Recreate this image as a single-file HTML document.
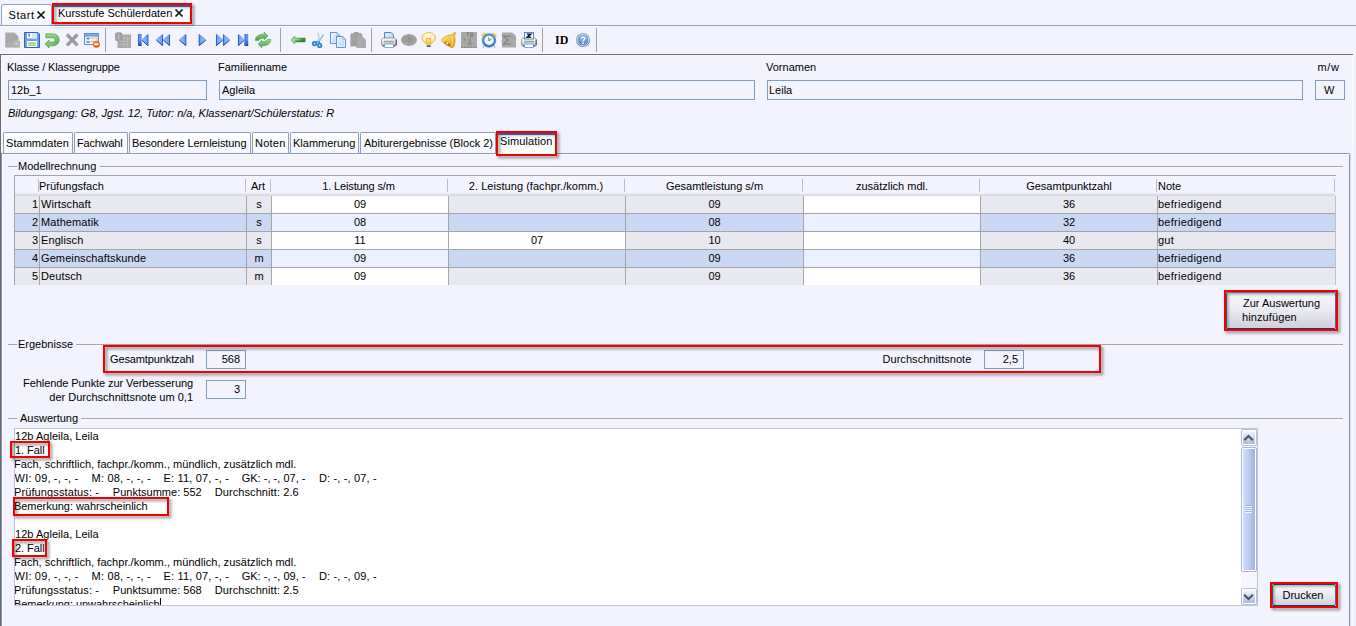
<!DOCTYPE html>
<html lang="de">
<head>
<meta charset="utf-8">
<title>Kursstufe Schülerdaten</title>
<style>
html,body{margin:0;padding:0;}
body{width:1356px;height:626px;overflow:hidden;background:#f2f3fd;position:relative;
 font-family:"Liberation Sans",sans-serif;font-size:11px;color:#000;line-height:13px;letter-spacing:0;}
.a{position:absolute;white-space:pre;}
.t{position:absolute;white-space:pre;height:13px;line-height:13px;}
.inp{position:absolute;box-sizing:border-box;border:1px solid #7f9db9;background:#f2f3fd;height:20px;}
.red{position:absolute;box-sizing:border-box;border:2px solid #f00000;filter:drop-shadow(2px 2px 1.5px rgba(0,0,0,.5));}
.tab{position:absolute;box-sizing:border-box;top:132px;height:21px;border:1px solid #8e9fbc;border-bottom:none;border-radius:2px 2px 0 0;background:linear-gradient(#fefeff,#f8f8ff);}
.hl{position:absolute;height:1px;background:#a4a4a4;}
.vl{position:absolute;width:1px;background:#a6a6a6;}
.ic{position:absolute;top:32px;width:16px;height:16px;}
.sep{position:absolute;top:28px;width:1px;height:24px;background:#a2a2a2;}
.row{position:absolute;left:15px;width:1320px;height:18px;}
.g{background:#e8e8f0;}
.b{background:#cbd8f5;}
.cell{position:absolute;top:0;height:18px;}
.c{position:absolute;white-space:pre;height:13px;line-height:13px;top:3px;}
.ln{position:absolute;left:16px;height:14px;line-height:14px;white-space:pre;overflow:hidden;}
.btn{box-sizing:border-box;border:1px solid #5a6a8a;border-top-color:#8a94ad;border-bottom-color:#1e3e70;border-radius:2px;background:linear-gradient(#f7f7fc 0%,#ececf4 45%,#cfd0dc 100%);}
.sbtn{box-sizing:border-box;border:1px solid #b6c0da;border-radius:2px;background:linear-gradient(#fcfcff,#a8b6da);box-shadow:inset 0 0 0 1px #fff;}
.sthumb{box-sizing:border-box;border:1px solid #a9b7da;border-radius:2px;background:linear-gradient(90deg,#d6e1fc,#c3d2f8 35%,#9eadd3);box-shadow:inset 0 0 0 1px #fff;}
</style>
</head>
<body>
<!-- top tab strip -->
<div class="a" style="left:0;top:25px;width:1356px;height:1px;background:#8fa3c2"></div>
<div class="a" style="left:1px;top:4px;width:51px;height:21px;box-sizing:border-box;border:1px solid #8fa3c2;border-bottom:none;border-radius:3px 3px 0 0;background:linear-gradient(#ffffff,#f6f7fe)"></div>
<div class="t" style="left:8.5px;top:9px;letter-spacing:0.6px">Start</div>
<svg class="a" style="left:36px;top:10px" width="10" height="10" viewBox="0 0 10 10"><path d="M1.5 1.5L8.5 8.5M8.5 1.5L1.5 8.5" stroke="#111" stroke-width="1.7" fill="none"/></svg>
<div class="a" style="left:54px;top:5px;width:136px;height:19px;background:#fff"></div>
<div class="a" style="left:54px;top:5px;width:136px;height:2px;background:#4f74cc"></div>
<div class="t" style="left:58px;top:7px;">Kursstufe Schülerdaten</div>
<svg class="a" style="left:174px;top:8px" width="10" height="10" viewBox="0 0 10 10"><path d="M1.5 1.5L8.5 8.5M8.5 1.5L1.5 8.5" stroke="#111" stroke-width="1.7" fill="none"/></svg>
<div class="red" style="left:52px;top:3px;width:140px;height:21px"></div>

<!-- toolbar -->
<div class="a" style="left:0;top:26px;width:602px;height:1px;background:#fafaff"></div><div class="a" style="left:0;top:53px;width:602px;height:1px;background:#fafaff"></div>
<div class="a" style="left:0;top:54px;width:1353px;height:1px;background:#6b6b6b"></div>
<div class="a" style="left:0;top:54px;width:1px;height:572px;background:#6b6b6b"></div>
<div class="a" style="left:1px;top:55px;width:1px;height:571px;background:#f9f9ff"></div><div class="a" style="left:1px;top:55px;width:1352px;height:1px;background:#f9f9ff"></div>
<!--ICONS-->
<svg width="0" height="0" style="position:absolute"><defs>
<linearGradient id="gb" x1="0" y1="0" x2="0" y2="1"><stop offset="0" stop-color="#7fb0ee"/><stop offset="1" stop-color="#1246c4"/></linearGradient>
<linearGradient id="gbl" x1="0" y1="0" x2="1" y2="0"><stop offset="0" stop-color="#b0d0f8"/><stop offset="1" stop-color="#5f94ea"/></linearGradient>
<linearGradient id="gbr" x1="1" y1="0" x2="0" y2="0"><stop offset="0" stop-color="#b0d0f8"/><stop offset="1" stop-color="#5f94ea"/></linearGradient>
<linearGradient id="gg" x1="0" y1="0" x2="0" y2="1"><stop offset="0" stop-color="#8fd07e"/><stop offset="1" stop-color="#2f8a2c"/></linearGradient>
<linearGradient id="gg2" x1="0" y1="0" x2="0" y2="1"><stop offset="0" stop-color="#96d68a"/><stop offset="1" stop-color="#4aa446"/></linearGradient>
<linearGradient id="ggd" x1="0" y1="0" x2="1" y2="1"><stop offset="0" stop-color="#8ed282"/><stop offset="0.6" stop-color="#76c46c"/><stop offset="1" stop-color="#3e9c3a"/></linearGradient>
<linearGradient id="gga" x1="0" y1="0" x2="1" y2="0"><stop offset="0" stop-color="#96d88c"/><stop offset="0.35" stop-color="#9cdc94"/><stop offset="1" stop-color="#1e7c28"/></linearGradient>
<linearGradient id="gpr" x1="0" y1="0" x2="0" y2="1"><stop offset="0" stop-color="#ffffff"/><stop offset="0.55" stop-color="#e2e2e2"/><stop offset="1" stop-color="#b0b0b0"/></linearGradient>
<linearGradient id="gpg" x1="0" y1="0" x2="1" y2="1"><stop offset="0" stop-color="#e6f0fc"/><stop offset="1" stop-color="#b9d6f8"/></linearGradient>
<linearGradient id="gdk" x1="0" y1="0" x2="0" y2="1"><stop offset="0.45" stop-color="#1030b0" stop-opacity="0"/><stop offset="1" stop-color="#0a2ab0" stop-opacity="0.75"/></linearGradient>
<radialGradient id="gbulb" cx="0.5" cy="0.4" r="0.6"><stop offset="0" stop-color="#fffff4"/><stop offset="0.6" stop-color="#fdf3ba"/><stop offset="1" stop-color="#f8c878"/></radialGradient>
<linearGradient id="gbell" x1="0" y1="0" x2="1" y2="1"><stop offset="0" stop-color="#ffec90"/><stop offset="0.5" stop-color="#f2c23c"/><stop offset="1" stop-color="#d89a1c"/></linearGradient>
<radialGradient id="ghelp" cx="0.5" cy="0.3" r="0.8"><stop offset="0" stop-color="#90b6e6"/><stop offset="1" stop-color="#4678bc"/></radialGradient>
<radialGradient id="gor" cx="0.4" cy="0.35" r="0.7"><stop offset="0" stop-color="#ff9a3a"/><stop offset="1" stop-color="#d4560a"/></radialGradient>
</defs></svg>
<svg class="a" style="left:5px;top:32px" width="16" height="16" viewBox="0 0 16 16"><path d="M1.2 0.5H9.5L13.5 4.5V9H15V15.5H1.2C0.6 15.5 0.2 15.1 0.2 14.5V1.5C0.2 0.9 0.6 0.5 1.2 0.5Z" fill="#a9a9a9"/><circle cx="11.3" cy="11.8" r="3.7" fill="#b3b3b3"/><path d="M9.3 11.8h4M11.3 9.8v4" stroke="#c6c6c6" stroke-width="1.2"/><path d="M1.5 11.5h6M1.5 13.5h6.5" stroke="#b4b4b4" stroke-width="1"/></svg>
<svg class="a" style="left:24px;top:32px" width="16" height="16" viewBox="0 0 16 16"><path d="M0.5 0.5H14L15.5 2V15.5H0.5Z" fill="#6f9fe2" stroke="#2f64bc"/><rect x="3" y="1" width="10" height="5.5" fill="#f4f9ff"/><rect x="8" y="1" width="5" height="5.5" fill="#d4e6fa"/><rect x="4.6" y="1.6" width="1.2" height="3" fill="#2f64bc"/><rect x="3" y="9" width="10" height="6" fill="#ffffff"/><path d="M4 11.2h8M4 13.2h8" stroke="#8cc152" stroke-width="1.3"/></svg>
<svg class="a" style="left:44px;top:32px" width="16" height="16" viewBox="0 0 16 16"><path d="M1.9 1.9H9.3A5.95 5.95 0 0 1 9.3 13.8H5V15.9L1 11.9L5 8.1V10.2H9A2.2 2.2 0 0 0 9 5.8H1.9Z" fill="url(#ggd)" stroke="#3f9e3c" stroke-width="0.7"/><path d="M2.6 3.2H9.3A4.6 4.6 0 0 1 12 4.2" stroke="#a6dc9a" stroke-width="0.9" fill="none"/></svg>
<svg class="a" style="left:65px;top:32px" width="15" height="16" viewBox="0 0 15 16"><path d="M2 2.5L12.4 13.3M12.4 2.5L2 13.3" stroke="#9b9b9b" stroke-width="3.3" fill="none"/></svg>
<svg class="a" style="left:84px;top:32px" width="17" height="16" viewBox="0 0 17 16"><rect x="0.5" y="1.5" width="14" height="11" fill="#f4f3ee" stroke="#5b8fd6"/><rect x="0.5" y="1.5" width="14" height="2.5" fill="#7fb0ea" stroke="#5b8fd6"/><path d="M2.5 6.5h3M2.5 10h3" stroke="#3f78d0" stroke-width="1.4"/><path d="M6.5 6h6.5v2.5M6.5 9.5h4" stroke="#bdbdb6" stroke-width="1" fill="none"/><circle cx="12.3" cy="12.2" r="3.5" fill="url(#gor)"/><rect x="10.2" y="11.6" width="4.2" height="1.4" fill="#fff"/></svg>
<svg class="a" style="left:115px;top:32px" width="17" height="16" viewBox="0 0 17 16"><rect x="2.5" y="2.5" width="13.5" height="13.5" fill="#a9a9a9"/><path d="M4 6.5h11M4 9.5h11M4 12.5h11M9 4v11M12.5 4v11" stroke="#bdbdbd" stroke-width="0.8"/><rect x="0" y="0.3" width="7.5" height="9" rx="2.5" fill="#a2a2a2"/><rect x="3" y="2.5" width="1.5" height="4.5" fill="#b9b9b9"/></svg>
<svg class="a" style="left:137px;top:32px" width="13" height="16" viewBox="0 0 13 16"><rect x="1" y="2" width="3.6" height="12" fill="#5f92e6"/><rect x="1" y="2" width="3.6" height="12" fill="url(#gdk)"/><path d="M1.4 2V14" stroke="#3a6cd8" stroke-width="0.8"/><path d="M11.3 2V14L4.6 8Z" fill="url(#gbl)"/><path d="M5.0 8.2L10.9 13.6" stroke="#1436b8" stroke-width="1" fill="none"/><path d="M10.850000000000001 2.6V13.8" stroke="#2a5cd0" stroke-width="0.9" fill="none"/><path d="M5.0 7.8L10.9 2.4" stroke="#5a8ee4" stroke-width="0.8" fill="none"/></svg>
<svg class="a" style="left:155px;top:32px" width="16" height="16" viewBox="0 0 16 16"><path d="M8 2V14L1 8Z" fill="url(#gbl)"/><path d="M1.4 8.2L7.6 13.6" stroke="#1436b8" stroke-width="1" fill="none"/><path d="M7.55 2.6V13.8" stroke="#2a5cd0" stroke-width="0.9" fill="none"/><path d="M1.4 7.8L7.6 2.4" stroke="#5a8ee4" stroke-width="0.8" fill="none"/><path d="M15 2V14L8 8Z" fill="url(#gbl)"/><path d="M8.4 8.2L14.6 13.6" stroke="#1436b8" stroke-width="1" fill="none"/><path d="M14.55 2.6V13.8" stroke="#2a5cd0" stroke-width="0.9" fill="none"/><path d="M8.4 7.8L14.6 2.4" stroke="#5a8ee4" stroke-width="0.8" fill="none"/></svg>
<svg class="a" style="left:178px;top:32px" width="10" height="16" viewBox="0 0 10 16"><path d="M8.2 2V14L1 8Z" fill="url(#gbl)"/><path d="M1.4 8.2L7.799999999999999 13.6" stroke="#1436b8" stroke-width="1" fill="none"/><path d="M7.749999999999999 2.6V13.8" stroke="#2a5cd0" stroke-width="0.9" fill="none"/><path d="M1.4 7.8L7.799999999999999 2.4" stroke="#5a8ee4" stroke-width="0.8" fill="none"/></svg>
<svg class="a" style="left:198px;top:32px" width="10" height="16" viewBox="0 0 10 16"><path d="M0.8 2V14L8.2 8Z" fill="url(#gbr)"/><path d="M7.799999999999999 8.2L1.2000000000000002 13.6" stroke="#1436b8" stroke-width="1" fill="none"/><path d="M1.25 2.6V13.8" stroke="#2a5cd0" stroke-width="0.9" fill="none"/><path d="M7.799999999999999 7.8L1.2000000000000002 2.4" stroke="#5a8ee4" stroke-width="0.8" fill="none"/></svg>
<svg class="a" style="left:215px;top:32px" width="16" height="16" viewBox="0 0 16 16"><path d="M1 2V14L8 8Z" fill="url(#gbr)"/><path d="M7.6 8.2L1.4 13.6" stroke="#1436b8" stroke-width="1" fill="none"/><path d="M1.45 2.6V13.8" stroke="#2a5cd0" stroke-width="0.9" fill="none"/><path d="M7.6 7.8L1.4 2.4" stroke="#5a8ee4" stroke-width="0.8" fill="none"/><path d="M8 2V14L15 8Z" fill="url(#gbr)"/><path d="M14.6 8.2L8.4 13.6" stroke="#1436b8" stroke-width="1" fill="none"/><path d="M8.45 2.6V13.8" stroke="#2a5cd0" stroke-width="0.9" fill="none"/><path d="M14.6 7.8L8.4 2.4" stroke="#5a8ee4" stroke-width="0.8" fill="none"/></svg>
<svg class="a" style="left:237px;top:32px" width="13" height="16" viewBox="0 0 13 16"><path d="M1 2V14L7.6 8Z" fill="url(#gbr)"/><path d="M7.199999999999999 8.2L1.4 13.6" stroke="#1436b8" stroke-width="1" fill="none"/><path d="M1.45 2.6V13.8" stroke="#2a5cd0" stroke-width="0.9" fill="none"/><path d="M7.199999999999999 7.8L1.4 2.4" stroke="#5a8ee4" stroke-width="0.8" fill="none"/><rect x="7.6" y="2" width="3.6" height="12" fill="#5f92e6"/><rect x="7.6" y="2" width="3.6" height="12" fill="url(#gdk)"/><path d="M8.0 2V14" stroke="#3a6cd8" stroke-width="0.8"/></svg>
<svg class="a" style="left:255px;top:32px" width="17" height="16" viewBox="0 0 17 16"><path d="M0.2 8.4C0.2 4.5 3.5 2.2 9.2 2.2V0L12.9 4L9.2 7.7V6.2C6 6.2 4.2 6.8 3.6 8.4Z" fill="url(#gg2)" stroke="#46a044" stroke-width="0.6"/><path d="M15.8 7.5C15.8 11.5 12.5 13.9 6.7 13.9V15.7L3.2 11.9L6.7 8.2V9.7C10 9.7 11.8 9.1 12.4 7.5Z" fill="url(#gg2)" stroke="#46a044" stroke-width="0.6"/></svg>
<svg class="a" style="left:290px;top:32px" width="16" height="16" viewBox="0 0 16 16"><path d="M0.9 8L4.7 4V6H15.1V9.9H4.7V11.9Z" fill="url(#gga)" stroke="#3f9e3c" stroke-width="0.6"/><path d="M5 9.2H14.8" stroke="#176e22" stroke-width="0.9"/></svg>
<svg class="a" style="left:311px;top:32px" width="14" height="16" viewBox="0 0 14 16"><path d="M7.2 0.6L8.3 10" stroke="#a9c8ec" stroke-width="1.5" fill="none"/><path d="M12.6 2.6L7.4 10.4" stroke="#94b8e4" stroke-width="1.5" fill="none"/><path d="M7.5 1.2L8.1 6.4" stroke="#f0f6fd" stroke-width="0.5" fill="none"/><circle cx="3.6" cy="11.6" r="1.8" fill="#dfeaf8" stroke="#2f7ed0" stroke-width="1.8"/><circle cx="8.6" cy="13.4" r="1.8" fill="#dfeaf8" stroke="#2f7ed0" stroke-width="1.8"/><path d="M5.2 10.4L7.2 9.2M8.5 11L8.3 9.4" stroke="#2f7ed0" stroke-width="1.3"/></svg>
<svg class="a" style="left:330px;top:32px" width="16" height="16" viewBox="0 0 16 16"><path d="M0.5 0.5H6.8L9.8 3.5V11.5H0.5Z" fill="#fff" stroke="#4f84d8" stroke-width="0.9"/><path d="M1.6 1.6H6.4L8.7 3.9V10.4H1.6Z" fill="url(#gpg)"/><path d="M6.5 4.5H12.7L15.5 7.3V15.5H6.5Z" fill="#fff" stroke="#4f84d8" stroke-width="0.9"/><path d="M7.6 5.6H12.3L14.4 7.7V14.4H7.6Z" fill="url(#gpg)"/><path d="M6.8 0.8V3.5H9.6M12.7 4.8V7.3H15.3" stroke="#6f9ce0" stroke-width="0.6" fill="none"/></svg>
<svg class="a" style="left:350px;top:32px" width="16" height="16" viewBox="0 0 16 16"><path d="M0.4 3C0.4 1.6 1.2 1.2 2.4 1.2H3.4C3.6 0.4 4.4 0 5.2 0H7.4C8.2 0 9 0.4 9.2 1.2H10.2C11.4 1.2 12.2 1.6 12.2 3V14.6H0.4Z" fill="#a2a2a2"/><path d="M6.5 4.6H12.6L16 8V16H6.5Z" fill="#ababab"/><path d="M6.5 4.6V14.6" stroke="#9a9a9a" stroke-width="0.6"/></svg>
<svg class="a" style="left:381px;top:32px" width="16" height="16" viewBox="0 0 16 16"><path d="M3.5 6.5V0.5H10L12.5 3V6.5Z" fill="url(#gpg)" stroke="#3a78d4" stroke-width="0.9"/><path d="M0.6 8.2C0.6 6.8 1.5 6 2.8 6H13.2C14.5 6 15.4 6.8 15.4 8.2V12.4C15.4 13.4 14.8 14 13.8 14H2.2C1.2 14 0.6 13.4 0.6 12.4Z" fill="url(#gpr)" stroke="#6a6a6a" stroke-width="0.6"/><path d="M15.1 7.6V13.2M2 14H14" stroke="#2a2a2a" stroke-width="0.8" fill="none"/><rect x="3" y="8.8" width="10" height="1.6" fill="#a2a2a2"/><path d="M3.5 12V15C3.5 15.3 3.7 15.5 4 15.5H12C12.3 15.5 12.5 15.3 12.5 15V12Z" fill="#fff" stroke="#5a94e2" stroke-width="0.8"/></svg>
<svg class="a" style="left:401px;top:32px" width="16" height="16" viewBox="0 0 16 16"><ellipse cx="8" cy="8" rx="8" ry="6" fill="#a4a4a4"/><ellipse cx="8" cy="7.4" rx="5.6" ry="3.8" fill="#9b9b9b"/><circle cx="8.3" cy="7.2" r="1" fill="#8a8a8a"/></svg>
<svg class="a" style="left:421px;top:32px" width="16" height="16" viewBox="0 0 16 16"><path d="M7.7 0.5C11.5 0.5 14.5 3 14.5 6.2C14.5 8.6 12.6 9.6 11 11.4H4.4C2.8 9.6 0.9 8.6 0.9 6.2C0.9 3 3.9 0.5 7.7 0.5Z" fill="url(#gbulb)" stroke="#f2aa56" stroke-width="0.8"/><rect x="5.7" y="6.4" width="4" height="4.6" fill="#ffe04a" stroke="#f4a04a" stroke-width="0.7"/><rect x="5.2" y="11.4" width="5" height="2.6" fill="#c9c9c9"/><rect x="5.8" y="13.4" width="3.8" height="1.6" fill="#555"/></svg>
<svg class="a" style="left:441px;top:32px" width="16" height="16" viewBox="0 0 16 16"><path d="M11.6 2.2C7 2.8 2.6 5 0.6 7.4C-0.1 8.2 0.3 9.2 1.2 9.8L9.8 15.4C11 16.2 12.6 15.6 13 14.4C14.6 10.5 14.6 6 13.2 2.6Z" fill="url(#gbell)" stroke="#d29a20" stroke-width="0.6"/><circle cx="13.6" cy="1.5" r="1.25" fill="#f6cf50" stroke="#d8a024" stroke-width="0.7"/><ellipse cx="6.4" cy="11.9" rx="3.5" ry="1.5" fill="#b47810" transform="rotate(33 6.4 11.9)"/><circle cx="6.1" cy="11.3" r="1.15" fill="#fdeeb4"/><path d="M10.6 4.4C11.4 7.6 11.6 11 11.4 13.8" stroke="#fff2b0" stroke-width="0.9" fill="none" opacity="0.7"/></svg>
<svg class="a" style="left:461px;top:32px" width="16" height="16" viewBox="0 0 16 16"><rect x="0" y="0" width="16" height="16" fill="#a9a9a9"/><path d="M5.2 0.8h3.2M6.8 0.8V4.6M9.6 0.7V4.6M9.6 0.8h1.3a0.85 0.85 0 0 1 0 1.7H9.6M9.6 2.6h1.5a0.95 0.95 0 0 1 0 2H9.6" stroke="#7a7a7a" stroke-width="0.85" fill="none"/><path d="M7.6 6V11H5.2L8.8 14.4L12.4 11H10V6Z" fill="#939393"/><path d="M3.4 5.4L3.9 7.1L5.6 7.6L3.9 8.1L3.4 9.8L2.9 8.1L1.2 7.6L2.9 7.1Z" fill="#8e8e8e"/><path d="M0 15.4H16" stroke="#8a8a8a" stroke-dasharray="2 1" stroke-width="1.2"/></svg>
<svg class="a" style="left:481px;top:32px" width="16" height="16" viewBox="0 0 16 16"><path d="M1.2 5.6L0.2 3.2L3.2 0.4L5.8 1.4Z" fill="#f6c83c"/><path d="M14.8 5.6L15.8 3.2L12.8 0.4L10.2 1.4Z" fill="#f6c83c"/><path d="M3.4 13.6L2 15.7M12.6 13.6L14 15.7" stroke="#b4b4b4" stroke-width="1.3"/><circle cx="8" cy="8.5" r="6.7" fill="#4e92dc"/><circle cx="8" cy="8.5" r="6.7" fill="none" stroke="#3674be" stroke-width="0.7"/><circle cx="8" cy="8.3" r="4.6" fill="#eef6ff"/><path d="M7.6 5.4L8 8.8L10.6 6.8" stroke="#606060" stroke-width="0.9" fill="none"/><path d="M3 11.5A6 6 0 0 0 13 11.5" stroke="#2f68b0" stroke-width="1" fill="none"/></svg>
<svg class="a" style="left:500px;top:32px" width="17" height="16" viewBox="0 0 17 16"><path d="M2 0.5H11.5C13 0.5 16 3.5 16 5V15.5H2V10.5L0.8 9.5L2 8.5Z" fill="#a9a9a9"/><path d="M11 4.2H3.6L8 8L3.6 12H11" stroke="#8a8a8a" stroke-width="1.6" fill="none"/></svg>
<svg class="a" style="left:521px;top:32px" width="16" height="16" viewBox="0 0 16 16"><path d="M0.6 8.2C0.6 6.8 1.5 6 2.8 6H13.2C14.5 6 15.4 6.8 15.4 8.2V12.4C15.4 13.4 14.8 14 13.8 14H2.2C1.2 14 0.6 13.4 0.6 12.4Z" fill="url(#gpr)" stroke="#6a6a6a" stroke-width="0.6"/><path d="M15.1 7.6V13.2M2 14H14" stroke="#2a2a2a" stroke-width="0.8" fill="none"/><rect x="3" y="8.8" width="10" height="1.6" fill="#a2a2a2"/><path d="M3.5 12V15C3.5 15.3 3.7 15.5 4 15.5H12C12.3 15.5 12.5 15.3 12.5 15V12Z" fill="#fff" stroke="#5a96e0" stroke-width="0.8"/><rect x="3.5" y="0.5" width="9" height="6.5" fill="#f8fbff" stroke="#3a82d8" stroke-width="0.9"/><path d="M5.8 2.1H9.9L6 5.2H10.2" stroke="#000" stroke-width="1.25" fill="none"/></svg>
<svg class="a" style="left:575px;top:32px" width="16" height="16" viewBox="0 0 16 16"><circle cx="8" cy="8" r="7" fill="url(#ghelp)"/><circle cx="8" cy="8" r="5.8" fill="none" stroke="#d4e4f6" stroke-width="0.9"/><path d="M6.2 6.6C6.2 4.6 9.9 4.6 9.9 6.5C9.9 7.8 8.1 7.7 8.1 9.3" stroke="#fff" stroke-width="1.4" fill="none"/><circle cx="8.1" cy="11.2" r="0.9" fill="#fff"/></svg>
<div class="a" style="left:555px;top:34px;height:13px;line-height:13px;font-family:'Liberation Serif',serif;font-weight:bold;font-size:12px;letter-spacing:0">ID</div>
<div class="sep" style="left:105px"></div>
<div class="sep" style="left:280px"></div>
<div class="sep" style="left:371px"></div>
<div class="sep" style="left:542px"></div>
<div class="sep" style="left:596px"></div>
<!--/ICONS-->

<!-- header fields -->
<div class="t" style="left:7px;top:61px;letter-spacing:-0.13px">Klasse / Klassengruppe</div>
<div class="t" style="left:218px;top:61px">Familienname</div>
<div class="t" style="left:766px;top:61px">Vornamen</div>
<div class="t" style="left:1317.5px;top:61px;letter-spacing:0.7px">m/w</div>
<div class="inp" style="left:8px;top:80px;width:199px"></div>
<div class="inp" style="left:219px;top:80px;width:536px"></div>
<div class="inp" style="left:767px;top:80px;width:536px"></div>
<div class="inp" style="left:1315px;top:80px;width:30px"></div>
<div class="t" style="left:11px;top:84px">12b_1</div>
<div class="t" style="left:222px;top:84px">Agleila</div>
<div class="t" style="left:769px;top:84px">Leila</div>
<div class="t" style="left:1324px;top:84px">W</div>
<div class="t" style="left:8px;top:107px;font-style:italic">Bildungsgang: G8, Jgst. 12, Tutor: n/a, Klassenart/Schülerstatus: R</div>

<!-- inner tabs -->
<div class="a" style="left:1px;top:153px;width:1349px;height:473px;box-sizing:border-box;border:1px solid #8699b7;border-bottom:none;border-radius:0 2px 0 0;box-shadow:1px 0 0 #dcdfea, inset 1px 1px 0 #fbfbff;"></div>
<div class="tab" style="left:3px;width:70px"></div><div class="t" style="left:6px;top:137px;letter-spacing:0.05px">Stammdaten</div>
<div class="tab" style="left:74px;width:54px"></div><div class="t" style="left:77px;top:137px;letter-spacing:-0.2px">Fachwahl</div>
<div class="tab" style="left:129px;width:122px"></div><div class="t" style="left:132px;top:137px;letter-spacing:-0.08px">Besondere Lernleistung</div>
<div class="tab" style="left:252px;width:37px"></div><div class="t" style="left:255px;top:137px;letter-spacing:0.25px">Noten</div>
<div class="tab" style="left:290px;width:69px"></div><div class="t" style="left:293px;top:137px">Klammerung</div>
<div class="tab" style="left:360px;width:136px"></div><div class="t" style="left:364px;top:137px">Abiturergebnisse (Block 2)</div>
<div class="a" style="left:498px;top:133px;width:57px;height:22px;background:#fff"></div>
<div class="a" style="left:498px;top:133px;width:57px;height:2px;background:#4f74cc"></div>
<div class="t" style="left:500px;top:135px;letter-spacing:0.12px">Simulation</div>
<div class="red" style="left:496px;top:131px;width:61px;height:25px"></div>

<!--BODY-->
<div class="hl" style="left:8px;top:166px;width:9px"></div>
<div class="hl" style="left:100px;top:166px;width:1243px"></div>
<div class="hl" style="left:8px;top:167px;width:9px;background:#fbfbff"></div>
<div class="hl" style="left:100px;top:167px;width:1243px;background:#fbfbff"></div>
<div class="t" style="left:18px;top:160px">Modellrechnung</div>
<div class="hl" style="left:8px;top:344px;width:9px"></div>
<div class="hl" style="left:76px;top:344px;width:1267px"></div>
<div class="hl" style="left:8px;top:345px;width:9px;background:#fbfbff"></div>
<div class="hl" style="left:76px;top:345px;width:1267px;background:#fbfbff"></div>
<div class="t" style="left:18px;top:338px">Ergebnisse</div>
<div class="hl" style="left:8px;top:418px;width:9px"></div>
<div class="hl" style="left:81px;top:418px;width:1262px"></div>
<div class="hl" style="left:8px;top:419px;width:9px;background:#fbfbff"></div>
<div class="hl" style="left:81px;top:419px;width:1262px;background:#fbfbff"></div>
<div class="t" style="left:20px;top:412px">Auswertung</div>
<div class="hl" style="left:14px;top:175px;width:1322px"></div>
<div class="vl" style="left:14px;top:175px;height:110px"></div>
<div class="a" style="left:15px;top:176px;width:1320px;height:17px;background:#f3f4fd"></div>
<div class="a" style="left:15px;top:193px;width:1320px;height:3px;background:linear-gradient(#ececf4,#d2d2da)"></div>
<div class="vl" style="left:38px;top:179px;height:13px;background:#bcbcc6"></div>
<div class="vl" style="left:245px;top:179px;height:13px;background:#bcbcc6"></div>
<div class="vl" style="left:270px;top:179px;height:13px;background:#bcbcc6"></div>
<div class="vl" style="left:447px;top:179px;height:13px;background:#bcbcc6"></div>
<div class="vl" style="left:624px;top:179px;height:13px;background:#bcbcc6"></div>
<div class="vl" style="left:802px;top:179px;height:13px;background:#bcbcc6"></div>
<div class="vl" style="left:979px;top:179px;height:13px;background:#bcbcc6"></div>
<div class="vl" style="left:1156px;top:179px;height:13px;background:#bcbcc6"></div>
<div class="vl" style="left:1334px;top:179px;height:13px;background:#bcbcc6"></div>
<div class="t" style="left:39px;top:180px">Prüfungsfach</div>
<div class="t" style="left:247px;top:180px;width:24px;text-align:center"><span style="margin-right:2px">Art</span></div>
<div class="t" style="left:272px;top:180px;width:176px;text-align:center"><span style="letter-spacing:-0.15px;margin-right:3px">1. Leistung s/m</span></div>
<div class="t" style="left:449px;top:180px;width:176px;text-align:center"><span style="letter-spacing:0.04px;margin-right:2px">2. Leistung (fachpr./komm.)</span></div>
<div class="t" style="left:626px;top:180px;width:177px;text-align:center">Gesamtleistung s/m</div>
<div class="t" style="left:804px;top:180px;width:176px;text-align:center">zusätzlich mdl.</div>
<div class="t" style="left:981px;top:180px;width:176px;text-align:center">Gesamtpunktzahl</div>
<div class="t" style="left:1158px;top:180px">Note</div>
<div class="a" style="left:15px;top:196px;width:1320px;height:17px;background:#e8e8f0"></div>
<div class="a" style="left:272px;top:196px;width:176px;height:17px;background:#ffffff"></div>
<div class="a" style="left:804px;top:196px;width:176px;height:17px;background:#ffffff"></div>
<div class="hl" style="left:15px;top:213px;width:1320px"></div>
<div class="t" style="left:15px;top:198px;width:23px;text-align:right">1</div>
<div class="t" style="left:41px;top:198px;letter-spacing:0.1px">Wirtschaft</div>
<div class="t" style="left:247px;top:198px;width:24px;text-align:center">s</div>
<div class="t" style="left:272px;top:198px;width:176px;text-align:center">09</div>
<div class="t" style="left:626px;top:198px;width:177px;text-align:center">09</div>
<div class="t" style="left:981px;top:198px;width:176px;text-align:center">36</div>
<div class="t" style="left:1158px;top:198px;letter-spacing:0.25px">befriedigend</div>
<div class="a" style="left:15px;top:214px;width:1320px;height:17px;background:#cbd8f5"></div>
<div class="a" style="left:272px;top:214px;width:176px;height:17px;background:#eaf0fd"></div>
<div class="a" style="left:804px;top:214px;width:176px;height:17px;background:#eaf0fd"></div>
<div class="hl" style="left:15px;top:231px;width:1320px"></div>
<div class="t" style="left:15px;top:216px;width:23px;text-align:right">2</div>
<div class="t" style="left:41px;top:216px;letter-spacing:0.1px">Mathematik</div>
<div class="t" style="left:247px;top:216px;width:24px;text-align:center">s</div>
<div class="t" style="left:272px;top:216px;width:176px;text-align:center">08</div>
<div class="t" style="left:626px;top:216px;width:177px;text-align:center">08</div>
<div class="t" style="left:981px;top:216px;width:176px;text-align:center">32</div>
<div class="t" style="left:1158px;top:216px;letter-spacing:0.25px">befriedigend</div>
<div class="a" style="left:15px;top:232px;width:1320px;height:17px;background:#e8e8f0"></div>
<div class="a" style="left:272px;top:232px;width:176px;height:17px;background:#ffffff"></div>
<div class="a" style="left:449px;top:232px;width:176px;height:17px;background:#ffffff"></div>
<div class="a" style="left:804px;top:232px;width:176px;height:17px;background:#ffffff"></div>
<div class="hl" style="left:15px;top:249px;width:1320px"></div>
<div class="t" style="left:15px;top:234px;width:23px;text-align:right">3</div>
<div class="t" style="left:41px;top:234px;letter-spacing:0.1px">Englisch</div>
<div class="t" style="left:247px;top:234px;width:24px;text-align:center">s</div>
<div class="t" style="left:272px;top:234px;width:176px;text-align:center">11</div>
<div class="t" style="left:449px;top:234px;width:176px;text-align:center">07</div>
<div class="t" style="left:626px;top:234px;width:177px;text-align:center">10</div>
<div class="t" style="left:981px;top:234px;width:176px;text-align:center">40</div>
<div class="t" style="left:1158px;top:234px;letter-spacing:0.25px">gut</div>
<div class="a" style="left:15px;top:250px;width:1320px;height:17px;background:#cbd8f5"></div>
<div class="a" style="left:272px;top:250px;width:176px;height:17px;background:#eaf0fd"></div>
<div class="a" style="left:804px;top:250px;width:176px;height:17px;background:#eaf0fd"></div>
<div class="hl" style="left:15px;top:267px;width:1320px"></div>
<div class="t" style="left:15px;top:252px;width:23px;text-align:right">4</div>
<div class="t" style="left:41px;top:252px;letter-spacing:0.1px">Gemeinschaftskunde</div>
<div class="t" style="left:247px;top:252px;width:24px;text-align:center">m</div>
<div class="t" style="left:272px;top:252px;width:176px;text-align:center">09</div>
<div class="t" style="left:626px;top:252px;width:177px;text-align:center">09</div>
<div class="t" style="left:981px;top:252px;width:176px;text-align:center">36</div>
<div class="t" style="left:1158px;top:252px;letter-spacing:0.25px">befriedigend</div>
<div class="a" style="left:15px;top:268px;width:1320px;height:17px;background:#e8e8f0"></div>
<div class="a" style="left:272px;top:268px;width:176px;height:17px;background:#ffffff"></div>
<div class="a" style="left:804px;top:268px;width:176px;height:17px;background:#ffffff"></div>
<div class="t" style="left:15px;top:270px;width:23px;text-align:right">5</div>
<div class="t" style="left:41px;top:270px;letter-spacing:0.1px">Deutsch</div>
<div class="t" style="left:247px;top:270px;width:24px;text-align:center">m</div>
<div class="t" style="left:272px;top:270px;width:176px;text-align:center">09</div>
<div class="t" style="left:626px;top:270px;width:177px;text-align:center">09</div>
<div class="t" style="left:981px;top:270px;width:176px;text-align:center">36</div>
<div class="t" style="left:1158px;top:270px;letter-spacing:0.25px">befriedigend</div>
<div class="vl" style="left:39px;top:196px;height:89px"></div>
<div class="vl" style="left:246px;top:196px;height:89px"></div>
<div class="vl" style="left:271px;top:196px;height:89px"></div>
<div class="vl" style="left:448px;top:196px;height:89px"></div>
<div class="vl" style="left:625px;top:196px;height:89px"></div>
<div class="vl" style="left:803px;top:196px;height:89px"></div>
<div class="vl" style="left:980px;top:196px;height:89px"></div>
<div class="vl" style="left:1157px;top:196px;height:89px"></div>
<div class="vl" style="left:1335px;top:196px;height:89px;background:#c0c0c8"></div>
<div class="a btn" style="left:1226px;top:292px;width:110px;height:37px"></div>
<div class="t" style="left:1243px;top:297px">Zur Auswertung</div>
<div class="t" style="left:1242px;top:311px;letter-spacing:0.1px">hinzufügen</div>
<div class="red" style="left:1224px;top:290px;width:114px;height:41px"></div>
<div class="t" style="left:110px;top:353px;letter-spacing:-0.12px">Gesamtpunktzahl</div>
<div class="inp" style="left:206px;top:350px;width:40px;height:19px"></div>
<div class="t" style="left:206px;top:353px;width:34px;text-align:right">568</div>
<div class="t" style="left:882.5px;top:353px;letter-spacing:0.05px">Durchschnittsnote</div>
<div class="inp" style="left:984px;top:350px;width:40px;height:19px"></div>
<div class="t" style="left:984px;top:353px;width:34px;text-align:right">2,5</div>
<div class="red" style="left:103px;top:345px;width:998px;height:28px"></div>
<div class="t" style="left:0px;top:377px;width:193px;text-align:right;letter-spacing:-0.08px">Fehlende Punkte zur Verbesserung</div>
<div class="t" style="left:0px;top:391px;width:193px;text-align:right">der Durchschnittsnote um 0,1</div>
<div class="inp" style="left:206px;top:380px;width:40px;height:19px"></div>
<div class="t" style="left:206px;top:383px;width:34px;text-align:right">3</div>
<div class="a" style="left:14px;top:428px;width:1244px;height:178px;box-sizing:border-box;border:1px solid #c0c4d2;background:#fff;overflow:hidden" id="ta">
<div class="ln" style="left:0;top:1px;width:1226px;height:12px;line-height:13px">
<span style="position:absolute;left:0.0px;top:0;letter-spacing:0.03px">12b Agleila, Leila</span>
</div>
<div class="ln" style="left:0;top:15px;width:1226px;height:12px;line-height:13px">
<span style="position:absolute;left:0.0px;top:0;letter-spacing:-0.05px">1. Fall</span>
</div>
<div class="ln" style="left:0;top:29px;width:1226px;height:12px;line-height:13px">
<span style="position:absolute;left:-1.0px;top:0;letter-spacing:0.04px">Fach, schriftlich, fachpr./komm., mündlich, zusätzlich mdl.</span>
</div>
<div class="ln" style="left:0;top:43px;width:1226px;height:12px;line-height:13px">
<span style="position:absolute;left:-0.4px;top:0;letter-spacing:0.17px">WI: 09, -, -, -</span>
<span style="position:absolute;left:76.6px;top:0;letter-spacing:0.17px">M: 08, -, -, -</span>
<span style="position:absolute;left:148.4px;top:0;letter-spacing:0.19px">E: 11, 07, -, -</span>
<span style="position:absolute;left:226.7px;top:0;letter-spacing:0.02px">GK: -, -, 07, -</span>
<span style="position:absolute;left:303.9px;top:0;letter-spacing:0.16px">D: -, -, 07, -</span>
</div>
<div class="ln" style="left:0;top:57px;width:1226px;height:12px;line-height:13px">
<span style="position:absolute;left:-1.0px;top:0;letter-spacing:0.11px">Prüfungsstatus: -</span>
<span style="position:absolute;left:97.8px;top:0;letter-spacing:0.02px">Punktsumme: 552</span>
<span style="position:absolute;left:199.7px;top:0;letter-spacing:0.09px">Durchschnitt: 2.6</span>
</div>
<div class="ln" style="left:0;top:71px;width:1226px;height:12px;line-height:13px">
<span style="position:absolute;left:-1.0px;top:0;letter-spacing:-0.04px">Bemerkung: wahrscheinlich</span>
</div>
<div class="ln" style="left:0;top:99px;width:1226px;height:12px;line-height:13px">
<span style="position:absolute;left:0.0px;top:0;letter-spacing:0.03px">12b Agleila, Leila</span>
</div>
<div class="ln" style="left:0;top:113px;width:1226px;height:12px;line-height:13px">
<span style="position:absolute;left:0.0px;top:0;letter-spacing:-0.05px">2. Fall</span>
</div>
<div class="ln" style="left:0;top:127px;width:1226px;height:12px;line-height:13px">
<span style="position:absolute;left:-1.0px;top:0;letter-spacing:0.04px">Fach, schriftlich, fachpr./komm., mündlich, zusätzlich mdl.</span>
</div>
<div class="ln" style="left:0;top:141px;width:1226px;height:12px;line-height:13px">
<span style="position:absolute;left:-0.4px;top:0;letter-spacing:0.17px">WI: 09, -, -, -</span>
<span style="position:absolute;left:76.6px;top:0;letter-spacing:0.17px">M: 08, -, -, -</span>
<span style="position:absolute;left:148.4px;top:0;letter-spacing:0.19px">E: 11, 07, -, -</span>
<span style="position:absolute;left:226.7px;top:0;letter-spacing:0.02px">GK: -, -, 09, -</span>
<span style="position:absolute;left:303.9px;top:0;letter-spacing:0.16px">D: -, -, 09, -</span>
</div>
<div class="ln" style="left:0;top:155px;width:1226px;height:12px;line-height:13px">
<span style="position:absolute;left:-1.0px;top:0;letter-spacing:0.11px">Prüfungsstatus: -</span>
<span style="position:absolute;left:97.8px;top:0;letter-spacing:0.02px">Punktsumme: 568</span>
<span style="position:absolute;left:199.7px;top:0;letter-spacing:0.09px">Durchschnitt: 2.5</span>
</div>
<div class="ln" style="left:0;top:169px;width:1226px;height:12px;line-height:13px">
<span style="position:absolute;left:-1.0px;top:0;letter-spacing:-0.04px">Bemerkung: unwahrscheinlich<span style="display:inline-block;width:1px;height:12px;background:#000;vertical-align:-2px"></span></span>
</div>
</div>
<div class="a" style="left:1241px;top:429px;width:16px;height:176px;background:#f6f7fe"></div>
<div class="a sbtn" style="left:1241px;top:429px;width:16px;height:17px"></div>
<svg class="a" style="left:1243px;top:434px" width="11" height="8" viewBox="0 0 11 8"><path d="M1.2 6.2L5.5 2L9.8 6.2" stroke="#44546e" stroke-width="2" fill="none"/></svg>
<div class="a sthumb" style="left:1241px;top:447px;width:16px;height:125px"></div>
<div class="a" style="left:1245px;top:505px;width:7px;height:8px;background:repeating-linear-gradient(#a4b2d6 0 1px,#f2f6ff 1px 2px)"></div>
<div class="a sbtn" style="left:1241px;top:588px;width:16px;height:17px"></div>
<svg class="a" style="left:1243px;top:593px" width="11" height="8" viewBox="0 0 11 8"><path d="M1.2 1.8L5.5 6L9.8 1.8" stroke="#44546e" stroke-width="2" fill="none"/></svg>
<div class="red" style="left:10px;top:441px;width:40px;height:17px"></div>
<div class="red" style="left:13px;top:497px;width:156px;height:19px"></div>
<div class="red" style="left:12px;top:539px;width:35px;height:18px"></div>
<div class="a btn" style="left:1272px;top:584px;width:64px;height:22px;border-top-color:#2f4f80"></div>
<div class="t" style="left:1282.5px;top:589px">Drucken</div>
<div class="red" style="left:1270px;top:582px;width:68px;height:26px"></div>
<div class="a" style="left:1352px;top:55px;width:1px;height:571px;background:#fbfbff"></div>
<!--/BODY-->
</body>
</html>
